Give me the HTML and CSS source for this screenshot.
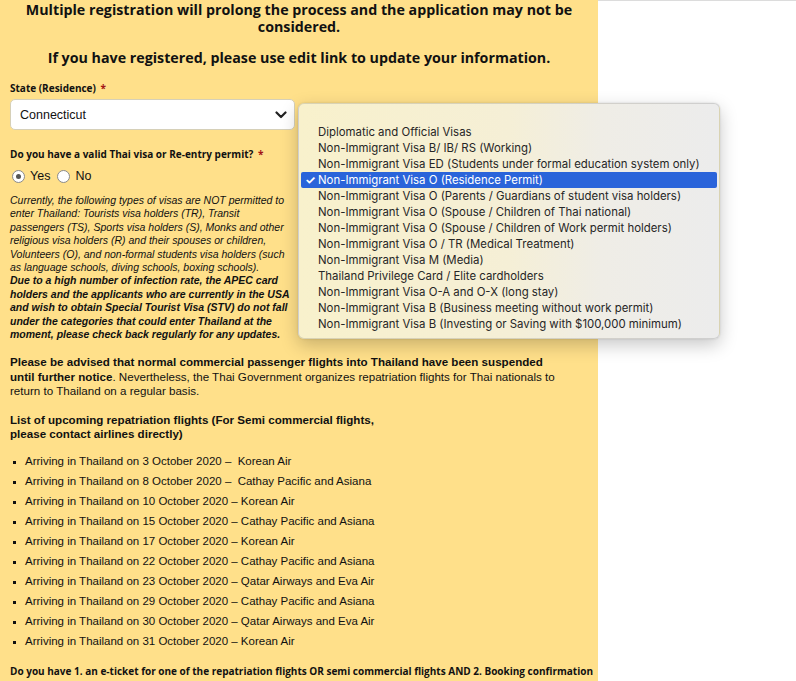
FILE: index.html
```html
<!DOCTYPE html>
<html>
<head>
<meta charset="utf-8">
<link rel="stylesheet" href="styles.css">
</head>
<body>
<div class="page">
  <div class="panel">
    <p class="notice">Multiple registration will prolong the process and the application may not be considered.</p>
    <p class="notice notice-2">If you have registered, please use edit link to update your information.</p>

    <div class="field">
      <label class="label">State (Residence) <span class="req">*</span></label>
      <div class="select">
        <span>Connecticut</span>
        <svg class="chev" width="12" height="8" viewBox="0 0 12 8"><path d="M1.5 1.5 L6 6 L10.5 1.5" fill="none" stroke="#222" stroke-width="2.2" stroke-linecap="round" stroke-linejoin="round"/></svg>
      </div>
    </div>

    <div class="field field-q">
      <label class="label">Do you have a valid Thai visa or Re-entry permit? <span class="req">*</span></label>
      <div class="radios">
        <span class="radio checked"></span><span class="rlabel">Yes</span>
        <span class="radio"></span><span class="rlabel">No</span>
      </div>
    </div>

    <div class="note">
      <p class="note-i">Currently, the following types of visas are NOT permitted to enter Thailand: Tourists visa holders (TR), Transit passengers (TS), Sports visa holders (S), Monks and other religious visa holders (R) and their spouses or children, Volunteers (O), and non-formal students visa holders (such as language schools, diving schools, boxing schools).</p>
      <p class="note-b">Due to a high number of infection rate, the APEC card holders and the applicants who are currently in the USA and wish to obtain Special Tourist Visa (STV) do not fall under the categories that could enter Thailand at the moment, please check back regularly for any updates.</p>
    </div>

    <p class="advice"><b>Please be advised that normal commercial passenger flights into Thailand have been suspended until further notice</b>. Nevertheless, the Thai Government organizes repatriation flights for Thai nationals to return to Thailand on a regular basis.</p>

    <p class="advice list-title"><b>List of upcoming repatriation flights (For Semi commercial flights,<br>please contact airlines directly)</b></p>

    <ul class="flights">
      <li>Arriving in Thailand on 3 October 2020 –&nbsp; Korean Air</li>
      <li>Arriving in Thailand on 8 October 2020 –&nbsp; Cathay Pacific and Asiana</li>
      <li>Arriving in Thailand on 10 October 2020 – Korean Air</li>
      <li>Arriving in Thailand on 15 October 2020 – Cathay Pacific and Asiana</li>
      <li>Arriving in Thailand on 17 October 2020 – Korean Air</li>
      <li>Arriving in Thailand on 22 October 2020 – Cathay Pacific and Asiana</li>
      <li>Arriving in Thailand on 23 October 2020 – Qatar Airways and Eva Air</li>
      <li>Arriving in Thailand on 29 October 2020 – Cathay Pacific and Asiana</li>
      <li>Arriving in Thailand on 30 October 2020 – Qatar Airways and Eva Air</li>
      <li>Arriving in Thailand on 31 October 2020 – Korean Air</li>
    </ul>

    <p class="label last">Do you have 1. an e-ticket for one of the repatriation flights OR semi commercial flights AND 2. Booking confirmation</p>
  </div>
  <div class="right"></div>

  <div class="menu">
    <div class="opt blank">&nbsp;</div>
    <div class="opt">Diplomatic and Official Visas</div>
    <div class="opt">Non-Immigrant Visa B/ IB/ RS (Working)</div>
    <div class="opt">Non-Immigrant Visa ED (Students under formal education system only)</div>
    <div class="opt sel"><span class="check">✓</span>Non-Immigrant Visa O (Residence Permit)</div>
    <div class="opt">Non-Immigrant Visa O (Parents / Guardians of student visa holders)</div>
    <div class="opt">Non-Immigrant Visa O (Spouse / Children of Thai national)</div>
    <div class="opt">Non-Immigrant Visa O (Spouse / Children of Work permit holders)</div>
    <div class="opt">Non-Immigrant Visa O / TR (Medical Treatment)</div>
    <div class="opt">Non-Immigrant Visa M (Media)</div>
    <div class="opt">Thailand Privilege Card / Elite cardholders</div>
    <div class="opt">Non-Immigrant Visa O-A and O-X (long stay)</div>
    <div class="opt">Non-Immigrant Visa B (Business meeting without work permit)</div>
    <div class="opt">Non-Immigrant Visa B (Investing or Saving with $100,000 minimum)</div>
  </div>
</div>
</body>
</html>
```

FILE: styles.css
```css
html, body {
  margin: 0;
  padding: 0;
  background: #ffffff;
}
.page {
  position: relative;
  display: flex;
  width: 796px;
  height: 681px;
  overflow: hidden;
  font-family: "Liberation Sans", Arial, sans-serif;
  color: #111;
}
.panel {
  width: 578px;
  flex: none;
  background: #ffe08a;
  padding: 1px 10px 0 10px;
}
.right {
  flex: 1;
  border-top: 1px solid #dcdcdc;
}
.notice {
  margin: 0;
  text-align: center;
  font-family: "Open Sans", sans-serif;
  font-weight: 700;
  font-size: 14.25px;
  line-height: 17px;
  color: #111;
}
.notice-2 {
  margin-top: 14px;
}
.field {
  margin-top: 14px;
}
.label {
  display: block;
  font-family: "Open Sans", sans-serif;
  font-weight: 700;
  font-size: 10px;
  line-height: 16px;
  margin: 0;
  color: #111;
}
.req {
  color: #a31515;
  margin-left: 2px;
}
.select {
  margin-top: 3px;
  width: 285px;
  height: 31px;
  box-sizing: border-box;
  background: #fff;
  border: 1px solid #d6d0b8;
  border-radius: 5px;
  display: flex;
  align-items: center;
  justify-content: space-between;
  padding: 0 7px 0 9px;
  font-size: 12.5px;
}
.chev {
  display: block;
}
.field-q {
  margin-top: 16px;
}
.radios {
  display: flex;
  align-items: center;
  margin-top: 6px;
  height: 16px;
  font-size: 12.5px;
}
.radio {
  width: 13px;
  height: 13px;
  border-radius: 50%;
  border: 1px solid #8a8a8a;
  background: #fff;
  box-sizing: border-box;
  margin: 0 5px 0 2px;
  position: relative;
}
.radio.checked::after {
  content: "";
  position: absolute;
  left: 3px;
  top: 3px;
  width: 5px;
  height: 5px;
  border-radius: 50%;
  background: #555;
}
.rlabel {
  margin-right: 5px;
}
.note {
  width: 286px;
  margin-top: 10px;
  font-size: 10.5px;
  line-height: 13.4px;
  font-style: italic;
}
.note p {
  margin: 0;
}
.note-b {
  font-weight: 700;
}
.advice {
  width: 560px;
  margin: 14px 0 0 0;
  font-size: 11.6px;
  line-height: 14.5px;
}
.list-title {
  margin-top: 14px;
}
.flights {
  margin: 9px 0 0 0;
  padding: 0 0 0 15px;
  font-size: 11.5px;
  line-height: 20px;
  list-style: square;
}
.flights li::marker {
  font-size: 9px;
}
.last {
  margin-top: 12px;
  white-space: nowrap;
}
.menu {
  position: absolute;
  left: 298px;
  top: 103px;
  width: 422px;
  box-sizing: border-box;
  padding: 4px 2px 6px 2px;
  border-radius: 6px;
  border: 1px solid rgba(0, 0, 0, 0.12);
  background: linear-gradient(90deg, #f8f1cc 0%, #f5efd6 50%, #efede6 72%, #ececec 100%);
  box-shadow: 0 6px 18px rgba(0, 0, 0, 0.22), 0 0 2px rgba(0, 0, 0, 0.15);
  font-family: Inter, "Noto Sans", sans-serif;
  font-size: 11.4px;
  color: #262626;
}
.opt {
  height: 16px;
  line-height: 16px;
  padding-left: 17px;
  white-space: nowrap;
  position: relative;
}
.opt.sel {
  background: #2a64da;
  color: #fff;
  border-radius: 2px;
}
.check {
  position: absolute;
  left: 4px;
  top: 0;
  font-size: 12px;
  font-weight: 700;
}
```
